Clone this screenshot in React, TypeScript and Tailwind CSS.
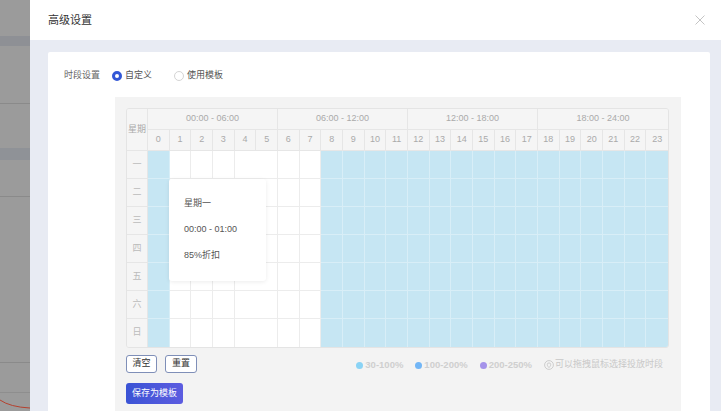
import React from 'react';

const hours = Array.from({ length: 24 }, (_, i) => i);
const days = ['一', '二', '三', '四', '五', '六', '日'];
const groups = ['00:00 - 06:00', '06:00 - 12:00', '12:00 - 18:00', '18:00 - 24:00'];

const isOn = (h: number) => h === 0 || h >= 8;

function BackdropStrip() {
  return (
    <div className="w-[30px] h-full flex flex-col bg-[#9b9b9b] shrink-0">
      <div className="h-[36px]" />
      <div className="h-[10px] bg-[#8e9095]" />
      <div className="h-[57px]" />
      <div className="h-px bg-[#8a8a8a]" />
      <div className="h-[44px]" />
      <div className="h-[12px] bg-[#8f9297]" />
      <div className="h-[36px]" />
      <div className="h-px bg-[#8a8a8a]" />
      <div className="h-[165px]" />
      <div className="h-px bg-[#8a8a8a]" />
      <div className="h-[29px]" />
      <div className="h-px bg-[#8e8e8e]" />
      <div className="flex-1">
        <svg width="30" height="18" viewBox="0 0 30 18">
          <path d="M0 7 Q10 14 30 15" fill="none" stroke="#b5412f" strokeWidth="1" />
        </svg>
      </div>
    </div>
  );
}

function Radio({ checked, label }: { checked?: boolean; label: string }) {
  return (
    <div className="flex items-center gap-[3px]">
      {checked ? (
        <span className="w-[10px] h-[10px] rounded-full border-[3px] border-[#3357d6] bg-white" />
      ) : (
        <span className="w-[10px] h-[10px] rounded-full border border-[#d4d4d4] bg-white" />
      )}
      <span className="text-[9px] text-[#555]">{label}</span>
    </div>
  );
}

function Schedule() {
  return (
    <div className="relative w-[543px] border border-[#e4e4e4] rounded-[3px] overflow-hidden">
      <div className="grid grid-cols-[21px_repeat(24,minmax(0,1fr))] grid-rows-[21px_21px_repeat(7,28px)]">
        <div className="row-span-2 flex items-center justify-center bg-[#f5f5f5] border-r border-b border-[#e6e6e6] text-[9px] text-[#aaa]">
          星期
        </div>
        {groups.map((g, i) => (
          <div
            key={g}
            className={`col-span-6 flex items-center justify-center bg-[#f5f5f5] border-b border-[#e6e6e6] text-[9px] text-[#aaa] ${i < 3 ? 'border-r' : ''}`}
          >
            {g}
          </div>
        ))}
        {hours.map((h) => (
          <div
            key={h}
            className={`flex items-center justify-center bg-[#f5f5f5] border-b border-[#e6e6e6] text-[9px] text-[#aaa] ${h < 23 ? 'border-r' : ''}`}
          >
            {h}
          </div>
        ))}
        {days.map((d, r) => (
          <React.Fragment key={d}>
            <div
              className={`flex items-center justify-center bg-[#f5f5f5] border-r border-[#e6e6e6] text-[9px] text-[#bbb] ${r < 6 ? 'border-b' : ''}`}
            >
              {d}
            </div>
            {hours.map((h) => (
              <div
                key={h}
                className={`${isOn(h) ? 'bg-[#c6e6f3] border-[#d8eef7]' : 'bg-white border-[#ececec]'} ${r < 6 ? 'border-b' : ''} ${h < 23 && h !== 4 ? 'border-r' : ''}`}
              />
            ))}
          </React.Fragment>
        ))}
      </div>
      <div className="absolute left-[42px] top-[70px] w-[97px] h-[102px] bg-white rounded-[3px] shadow-[0_1px_4px_rgba(0,0,0,0.08)] pl-[15px] pt-[18px] flex flex-col gap-[14px] text-[9px] text-[#555] leading-[12px]">
        <span>星期一</span>
        <span>00:00 - 01:00</span>
        <span>85%折扣</span>
      </div>
    </div>
  );
}

function Legend() {
  return (
    <div className="flex items-center gap-[12px] text-[9.5px] font-bold text-[#cfcfcf] pr-[6px] pt-[3px]">
      <div className="flex items-center gap-[2px]">
        <span className="w-[7px] h-[7px] rounded-full bg-[#8ad3f5]" />
        <span>30-100%</span>
      </div>
      <div className="flex items-center gap-[2px]">
        <span className="w-[7px] h-[7px] rounded-full bg-[#72b6f6]" />
        <span>100-200%</span>
      </div>
      <div className="flex items-center gap-[2px]">
        <span className="w-[7px] h-[7px] rounded-full bg-[#a593ea]" />
        <span>200-250%</span>
      </div>
      <div className="flex items-center gap-[1px] font-normal text-[#c8c8c8] text-[9px]">
        <svg width="10" height="10" viewBox="0 0 10 10" fill="none" stroke="#c8c8c8" strokeWidth="0.9">
          <circle cx="5" cy="5" r="4.4" />
          <path d="M5 7.6 C3.6 6.2 3.3 5.3 3.3 4.6 A1.7 1.7 0 0 1 6.7 4.6 C6.7 5.3 6.4 6.2 5 7.6 Z" />
        </svg>
        <span>可以拖拽鼠标选择投放时段</span>
      </div>
    </div>
  );
}

export default function App() {
  return (
    <div className="w-[727px] h-[420px] overflow-hidden bg-white flex flex-col font-['Liberation_Sans','Noto_Sans_CJK_SC',sans-serif]">
      <div className="h-[411px] flex">
        <BackdropStrip />
        <div className="w-[691px] flex flex-col">
          <div className="h-[40px] bg-white flex items-center justify-between pl-[18px] pr-[16px]">
            <span className="text-[11px] text-[#333]">高级设置</span>
            <svg width="10" height="10" viewBox="0 0 10 10" stroke="#c4c4c4" strokeWidth="1">
              <path d="M0.5 0.5 L9.5 9.5 M9.5 0.5 L0.5 9.5" />
            </svg>
          </div>
          <div className="flex-1 bg-[#e8ebf3] pl-[18px] pr-[11px] pt-[12px] flex">
            <div className="flex-1 bg-white rounded-t-[2px] flex flex-col">
              <div className="h-[12px] mt-[18px] pl-[16px] flex items-center">
                <span className="text-[9px] text-[#666] w-[48px]">时段设置</span>
                <Radio checked label="自定义" />
                <div className="w-[22px]" />
                <Radio label="使用模板" />
              </div>
              <div className="flex-1 mt-[15px] ml-[67px] mr-[29px] bg-[#f3f3f3] pl-[11px] pt-[11px] flex flex-col">
                <Schedule />
                <div className="mt-[7px] w-[543px] flex items-start justify-between">
                  <div className="flex gap-[8px]">
                    <button className="w-[31px] h-[18px] rounded-[3px] border border-[#7f8fb8] bg-white text-[9px] text-[#333] flex items-center justify-center">
                      清空
                    </button>
                    <button className="w-[32px] h-[18px] rounded-[3px] border border-[#7f8fb8] bg-white text-[9px] text-[#333] flex items-center justify-center">
                      重置
                    </button>
                  </div>
                  <Legend />
                </div>
                <button className="mt-[10px] w-[57px] h-[21px] rounded-[3px] bg-gradient-to-r from-[#3a53d5] to-[#5c5ce0] text-white text-[9px] flex items-center justify-center">
                  保存为模板
                </button>
              </div>
            </div>
          </div>
        </div>
        <div className="flex-1 bg-white" />
      </div>
      <div className="flex-1 bg-white" />
    </div>
  );
}
